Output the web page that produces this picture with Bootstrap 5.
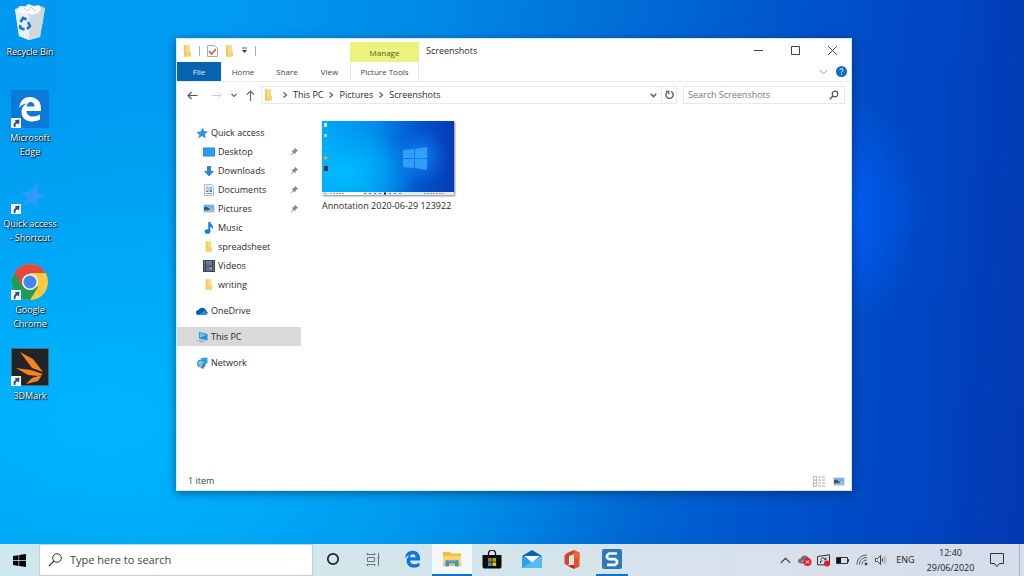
<!DOCTYPE html>
<html lang="en">
<head>
<meta charset="utf-8">
<meta name="viewport" content="width=device-width, initial-scale=1">
<title>Screenshots</title>
<link href="https://cdn.jsdelivr.net/npm/bootstrap@5.3.0/dist/css/bootstrap.min.css" rel="stylesheet">
<style>
  body { font-family: "Open Sans", "Noto Sans", sans-serif; font-size: 9px; line-height: 14px; color: #2a2a2a; }
  button, input { font: inherit; color: inherit; }
  button { background: none; border: 0; padding: 0; }
  svg { display: block; flex: none; }
  a { color: inherit; text-decoration: none; }

  .screen {
    background:
      radial-gradient(75px 115px at 850px 212px, rgba(0, 98, 255, .8), rgba(0, 90, 240, 0)),
      radial-gradient(560px 330px at 100px 420px, rgba(0, 186, 255, .85), rgba(0, 180, 255, 0)),
      linear-gradient(94deg, #0098f0 0, #009cf1 20%, #0088e6 42%, #0068d4 62%, #0052ca 77%, #0045c1 89%, #0339b2 100%);
  }

  /* desktop shortcuts */
  .shortcuts { width: 60px; padding-top: 4px; }
  .shortcut { height: 86px; color: #fff; text-align: center; text-shadow: 1px 1px 1px #000, 0 0 2px rgba(0, 0, 0, .8); }
  .shortcut svg { margin: 0 auto 3px; }

  /* explorer window */
  .explorer { margin: 38px 172px 53px 116px; background: #fff; border: 1px solid #cfeaf8; box-shadow: 0 2px 9px rgba(0, 20, 70, .5); min-width: 0; }
  .title-row { height: 23px; }
  .quick-tools { width: 173px; padding-left: 6px; gap: 7px; }
  .quick-tools .rule { width: 1px; height: 10px; background: #aaa; }
  .manage { width: 69px; height: 20px; background: #ecf27b; color: #555b30; padding-top: 4px; font-size: 8px; }
  .win-title { padding-left: 7px; }
  .win-btn { width: 37px; height: 23px; }
  .tab-row { height: 20px; border-bottom: 1px solid #ececec; font-size: 8px; color: #444; }
  .tab-row .tab { width: 44px; }
  .tab-row .tab-file { background: #0563b1; color: #e4f1fb; }
  .tab-row .tab-view { width: 41px; }
  .tab-row .tab-wide { width: 69px; border: solid #e8e8e8; border-width: 0 1px; }
  .address-row { padding: 4px 6px 4px 3px; }
  .step { width: 24px; height: 18px; }
  .step-sm { width: 12px; }
  .step-md { width: 21px; }
  .field { height: 18px; border: 1px solid #e8e8e8; }
  .crumbs { gap: 5px; padding-left: 2px; }
  .reload { width: 15px; border-left: 1px solid #e8e8e8; }
  .find { width: 162px; margin-left: 6px; padding: 0 5px 0 4px; }
  .find input, .task-search input { border: 0; outline: 0; padding: 0; background: none; min-width: 0; }
  .find input::placeholder { color: #7a7a7a; opacity: 1; }

  .tree { width: 124px; padding-top: 15px; }
  .tree a { height: 19px; gap: 3px; padding-left: 26px; }
  .tree .top { padding-left: 19px; }
  .tree .spaced { margin-top: 7px; }
  .tree .picked { background: #d9d9d9; }
  .tree .pin { margin: 0 2px 0 auto; }
  .tree .ico { width: 12px; }
  .files { padding: 13px 21px; }
  .thumb { width: 132px; margin-bottom: 4px; box-shadow: 1px 1px 2px rgba(0, 0, 0, .5); }
  .status { height: 18px; padding: 0 6px 0 11px; color: #35405c; }

  /* taskbar */
  .taskbar { height: 32px; background: linear-gradient(90deg, #cde8ef, #d4e5eb 45%, #d8e1ec 75%, #d5dcea); color: #222; }
  .start { width: 39px; }
  .task-search { width: 274px; background: #fff; border: 1px solid #c6cdd2; padding-left: 8px; gap: 8px; font-size: 11px; line-height: 16px; }
  .task-search input::placeholder { color: #444; opacity: 1; }
  .task { width: 40px; border-bottom: 2px solid transparent; }
  .task-slim { width: 39px; }
  .task-open { background: #f2f8fb; border-color: #0a75cf; }
  .task-run { width: 32px; margin: 0 4px; border-color: #0a75cf; }
  .tray { width: 19px; }
  .lang { width: 31px; }
  .clock { width: 59px; line-height: 15px; }
  .notes { width: 34px; }
  .peek { width: 5px; margin-left: 5px; border-left: 1px solid #a9b2bf; }
</style>
</head>
<body>
<svg width="0" height="0" class="position-absolute" aria-hidden="true">
  <defs>
    <symbol id="folder" viewBox="0 0 9 12"><path d="M1 0h5l1 1v5l1 1v4l-1 1H1z" fill="#fbdc82"/><path d="M1 0l2 1v10l-2 1z" fill="#f3c95c"/><path d="M3 7h5v4H3z" fill="#f8d272"/></symbol>
    <symbol id="arrow" viewBox="0 0 10 10"><path d="M0 0h10v10H0z" fill="#f4f6fb"/><path d="M3 9C2 6 3.500 4.500 5 4L3.500 2.500 8.500 1.500 8 6.500 6.600 5.300C5 6 4 7 4.500 9z" fill="#27479a"/></symbol>
    <symbol id="pin" viewBox="0 0 9 9"><path d="M5 .8 8.200 4 7 4.300 5.500 5.800 5.200 7.500 3.600 6 .8 8.500.5 8.200 3 5.300 1.500 3.800 3.200 3.500 4.700 2z" fill="#85898d"/></symbol>
    <symbol id="picture" viewBox="0 0 12 9"><path d="M0 0h12v9H0z" fill="#dfe5ea"/><path d="M1 1h10v4H1z" fill="#6fb4ee"/><path d="M1 3q3-1 5 1.500T11 5v3H1z" fill="#2e5b78"/><path d="M1 6.500 11 5.500V8H1z" fill="#98bccb"/></symbol>
    <symbol id="next" viewBox="0 0 6 8"><path d="m1.500 1.500 3 2.500-3 2.500" fill="none" stroke="#555" stroke-width="1.200"/></symbol>
    <symbol id="edge" viewBox="0 0 24 26"><path d="M1 12C2 4 7 1 12 1c7 0 11 5 11 11v3H8.500c.3 4 3 5.500 6.500 5.500 2.500 0 5-.8 7-2v5c-2 1.200-5 2-8 2C7 25.500 3.500 21 3.500 16c0-4 2-7 5-8.500C5 8 2.500 9.500 1 12zm7.500-1.500h8C16.500 7.500 15 6 12.700 6 10.500 6 9 7.800 8.500 10.500z"/></symbol>
    <linearGradient id="wall"><stop offset="0" stop-color="#00a8f8"/><stop offset=".4" stop-color="#008eec"/><stop offset=".7" stop-color="#0058cf"/><stop offset="1" stop-color="#053cb4"/></linearGradient>
    <radialGradient id="glow"><stop offset="0" stop-color="#1593ff" stop-opacity=".8"/><stop offset="1" stop-color="#1070f0" stop-opacity="0"/></radialGradient>
    <radialGradient id="cyan"><stop offset="0" stop-color="#00bcff"/><stop offset="1" stop-color="#00b4ff" stop-opacity="0"/></radialGradient>
  </defs>
</svg>

<div class="screen d-flex flex-column min-vh-100">
  <main class="d-flex flex-grow-1">
    <nav class="shortcuts flex-shrink-0" aria-label="Desktop">
      <a href="#" class="shortcut d-block">
        <svg width="38" height="38" viewBox="0 0 38 38"><path d="M4 5 34 4 29 33 18 36 8 32z" fill="#dfe7ec"/><path d="m4 5 14 3v28L8 32z" fill="#e9eef0"/><path d="m18 8 16-4-5 29-11 3z" fill="#cfd8dd"/><path d="m4 5 6-3 20 0 4 2-16 5z" fill="#b9cdd8"/><path d="m6 6 3-4 5 1 3-3 6 2 5-1 2 4-3 4-6 2-4-2-5 1z" fill="#fafafa"/><path d="m13 4 4 3 3-4 4 4" fill="none" stroke="#c5ccd2"/><g fill="none" stroke="#1679c9" stroke-width="2.600"><path d="m9.500 18 2.500-4 3.500 1.500M17 18l2 4-3 3M13.500 25.500 9.500 24l-.5-3"/></g></svg>
        Recycle Bin</a>
      <a href="#" class="shortcut d-block">
        <svg width="38" height="38" viewBox="0 0 38 38"><path d="M0 0h38v38H0z" fill="#0b79d8"/><use href="#edge" x="7" y="6" width="24" height="26" fill="#fff"/><use href="#arrow" y="28" width="10" height="10"/></svg>
        Microsoft<br>Edge</a>
      <a href="#" class="shortcut d-block">
        <svg width="38" height="38" viewBox="0 0 38 38"><path d="m26 8 1 9 6 2-7 4 1 8-7-5-8 4 4-8-7-5 9-1z" fill="#2c9cf6"/><use href="#arrow" y="28" width="10" height="10"/></svg>
        Quick access<br>- Shortcut</a>
      <a href="#" class="shortcut d-block">
        <svg width="38" height="38" viewBox="0 0 38 38"><circle cx="19" cy="20" r="18" fill="#fbc93f"/><path d="M19 20 3.400 11A18 18 0 0 0 19 38l8-13z" fill="#1f9d55"/><path d="M3.400 11A18 18 0 0 1 34.600 11H19l-8 13z" fill="#e0493c"/><circle cx="19" cy="20" r="8" fill="#f4f7fc"/><circle cx="19" cy="20" r="6.500" fill="#4285f0"/><use href="#arrow" y="28" width="10" height="10"/></svg>
        Google<br>Chrome</a>
      <a href="#" class="shortcut d-block">
        <svg width="38" height="38" viewBox="0 0 38 38"><path d="M.5.500h37v37H.5z" fill="#222427" stroke="#4d6673"/><path d="M9 4 22 11l10 13-11-4zM5 20l15 2 12 4-5 2-10-1zM31 27l-4 6-12 3 6-6z" fill="#f58320"/><use href="#arrow" y="28" width="10" height="10"/></svg>
        3DMark</a>
    </nav>

    <section class="explorer d-flex flex-column flex-grow-1" aria-label="Screenshots">
      <header class="title-row d-flex align-items-center">
        <div class="quick-tools d-flex align-items-center">
          <svg width="9" height="12"><use href="#folder"/></svg>
          <span class="rule"></span>
          <button type="button" aria-label="Properties"><svg width="11" height="12" viewBox="0 0 11 12"><path d="M.5.500h7l3 3v8H.5z" fill="#fff" stroke="#aaa"/><path d="m2 6 2.500 3L9 4" fill="none" stroke="#e4512e" stroke-width="1.500"/></svg></button>
          <button type="button" aria-label="New folder"><svg width="9" height="12"><use href="#folder"/></svg></button>
          <button type="button" aria-label="Customise toolbar"><svg width="7" height="7" viewBox="0 0 7 7"><path d="M1 1h5" stroke="#555"/><path d="M1 3h5L3.500 6z" fill="#333"/></svg></button>
          <span class="rule"></span>
        </div>
        <div class="manage align-self-end text-center">Manage</div>
        <div class="win-title">Screenshots</div>
        <div class="d-flex ms-auto">
          <button type="button" class="win-btn d-flex align-items-center justify-content-center" aria-label="Minimise"><svg width="9" height="9" viewBox="0 0 9 9"><path d="M0 4.500h9" stroke="#444"/></svg></button>
          <button type="button" class="win-btn d-flex align-items-center justify-content-center" aria-label="Maximise"><svg width="9" height="9" viewBox="0 0 9 9"><path d="M.5.500h8v8h-8z" fill="none" stroke="#444"/></svg></button>
          <button type="button" class="win-btn d-flex align-items-center justify-content-center" aria-label="Close"><svg width="9" height="9" viewBox="0 0 9 9"><path d="m0 0 9 9M9 0 0 9" stroke="#444"/></svg></button>
        </div>
      </header>

      <div class="tab-row d-flex">
        <button type="button" class="tab tab-file">File</button>
        <button type="button" class="tab">Home</button>
        <button type="button" class="tab">Share</button>
        <button type="button" class="tab tab-view">View</button>
        <button type="button" class="tab tab-wide">Picture Tools</button>
        <div class="d-flex align-items-center ms-auto gap-2 pe-1">
          <button type="button" aria-label="Expand ribbon"><svg width="9" height="6" viewBox="0 0 9 6"><path d="m.5.800 4 4 4-4" fill="none" stroke="#999"/></svg></button>
          <button type="button" aria-label="Help"><svg width="11" height="11" viewBox="0 0 11 11"><circle cx="5.500" cy="5.500" r="5.500" fill="#0a70c4"/><path d="M3.900 4.100c.2-2 3.400-1.800 3.200 0C7 5.300 5.500 5.200 5.500 6.700M5.500 7.800v1" fill="none" stroke="#fff"/></svg></button>
        </div>
      </div>

      <div class="address-row d-flex align-items-center">
        <button type="button" class="step d-flex align-items-center justify-content-center" aria-label="Back"><svg width="11" height="9" viewBox="0 0 11 9"><path d="M10.500 4.500H1M4.500 1 1 4.500 4.500 8" fill="none" stroke="#555" stroke-width="1.200"/></svg></button>
        <button type="button" class="step d-flex align-items-center justify-content-center" aria-label="Forward"><svg width="11" height="9" viewBox="0 0 11 9"><path d="M1 4.500h9M6.500 1 10 4.500 6.500 8" fill="none" stroke="#d0d0d0"/></svg></button>
        <button type="button" class="step step-sm d-flex align-items-center justify-content-center" aria-label="Recent"><svg width="6" height="5" viewBox="0 0 6 5"><path d="m.5 1 2.500 2.500L5.500 1" fill="none" stroke="#666" stroke-width="1.200"/></svg></button>
        <button type="button" class="step step-md d-flex align-items-center justify-content-center" aria-label="Up"><svg width="9" height="11" viewBox="0 0 9 11"><path d="M4.500 11V1M1 4.500 4.500 1 8 4.500" fill="none" stroke="#666" stroke-width="1.100"/></svg></button>
        <div class="field d-flex align-items-center flex-grow-1">
          <div class="crumbs d-flex align-items-center">
            <svg width="9" height="12"><use href="#folder"/></svg>
            <svg class="ms-1" width="6" height="8"><use href="#next"/></svg>
            <a href="#">This PC</a>
            <svg width="6" height="8"><use href="#next"/></svg>
            <a href="#">Pictures</a>
            <svg width="6" height="8"><use href="#next"/></svg>
            <a href="#">Screenshots</a>
          </div>
          <button type="button" class="ms-auto me-1" aria-label="Previous locations"><svg width="7" height="5" viewBox="0 0 7 5"><path d="m.8.800 2.700 3 2.700-3" fill="none" stroke="#555" stroke-width="1.400"/></svg></button>
          <button type="button" class="reload align-self-stretch d-flex align-items-center justify-content-center" aria-label="Refresh"><svg width="9" height="10" viewBox="0 0 9 10"><path d="M6 1.500a3.600 3.600 0 1 1-4 .8M1 1.300h2.800v3" fill="none" stroke="#555" stroke-width="1.300"/></svg></button>
        </div>
        <label class="field find d-flex align-items-center">
          <input class="flex-grow-1" type="text" placeholder="Search Screenshots" aria-label="Search Screenshots">
          <svg width="10" height="10" viewBox="0 0 10 10"><circle cx="6" cy="4" r="2.800" fill="none" stroke="#555" stroke-width="1.200"/><path d="M4 6 .8 9.200" stroke="#555" stroke-width="1.500"/></svg>
        </label>
      </div>

      <div class="d-flex flex-grow-1">
        <nav class="tree d-flex flex-column flex-shrink-0" aria-label="Folders">
          <a href="#" class="top d-flex align-items-center"><svg class="ico" width="12" height="12" viewBox="0 0 12 12"><path d="m7 .5 1 3.500 4 .5L9 7l.5 4.500L6 9l-4 2.500L3.500 8 .5 5l4-.5z" fill="#2b94e3"/></svg>Quick access</a>
          <a href="#" class="d-flex align-items-center"><svg class="ico" width="12" height="12" viewBox="0 0 12 12"><path d="M0 1.500h12v9H0z" fill="#1988e0"/><path d="M1 2.500h10v7H1z" fill="#2f9cf0"/></svg>Desktop<svg class="pin" width="9" height="9"><use href="#pin"/></svg></a>
          <a href="#" class="d-flex align-items-center"><svg class="ico" width="12" height="12" viewBox="0 0 12 12"><path d="M4 1h4v5h3l-5 5.500L1 6h3z" fill="#2a86d6"/></svg>Downloads<svg class="pin" width="9" height="9"><use href="#pin"/></svg></a>
          <a href="#" class="d-flex align-items-center"><svg class="ico" width="12" height="12" viewBox="0 0 12 12"><path d="M1.500.500h7l2 2v9h-9z" fill="#f3f6f8" stroke="#b4bcc2"/><path d="M3 3h2.500M6.500 3.500H9M3 5h6M3 9.500h6" stroke="#7ea0be"/><path d="M3 6.500h2.500V8H3zM6.500 6H9v2H6.500z" fill="#3e90d0"/></svg>Documents<svg class="pin" width="9" height="9"><use href="#pin"/></svg></a>
          <a href="#" class="d-flex align-items-center"><svg class="ico" width="12" height="9"><use href="#picture"/></svg>Pictures<svg class="pin" width="9" height="9"><use href="#pin"/></svg></a>
          <a href="#" class="d-flex align-items-center"><svg class="ico" width="12" height="12" viewBox="0 0 12 12"><ellipse cx="4.500" cy="9.500" rx="2.800" ry="2.300" fill="#0f82d6"/><path d="M5.300 0H7.300c0 2.500 3.700 3 2.700 7.500C9.300 5.500 8.300 5 7.300 4.800v5h-2z" fill="#0f82d6"/></svg>Music</a>
          <a href="#" class="d-flex align-items-center"><svg class="ico" width="12" height="11"><use href="#folder"/></svg>spreadsheet</a>
          <a href="#" class="d-flex align-items-center"><svg class="ico" width="12" height="12" viewBox="0 0 12 12"><path d="M0 0h12v12H0z" fill="#3b4650"/><path d="M3 1h6v4.500H3z" fill="#4b86c9"/><path d="M3 6.500h6V11H3z" fill="#5574a6"/><path d="M3 3.500 6 2l1 3.500H3z" fill="#a8604b"/><path d="M6 8l3-1v3z" fill="#d69b4c"/><path d="M1.500 1v10M10.500 1v10" stroke="#9ba5ac" stroke-dasharray="1 1.200"/></svg>Videos</a>
          <a href="#" class="d-flex align-items-center"><svg class="ico" width="12" height="11"><use href="#folder"/></svg>writing</a>
          <a href="#" class="top spaced d-flex align-items-center"><svg class="ico" width="12" height="12" viewBox="0 0 12 12"><path d="M2.500 10a2.500 2.500 0 0 1 0-5 4 4 0 0 1 7-.5L12 8l-3 2z" fill="#0b5cad"/><path d="M2.500 10 7 6.500l2.500-.8a2.200 2.200 0 0 1 0 4.300z" fill="#1e8fe0"/></svg>OneDrive</a>
          <a href="#" class="top spaced picked d-flex align-items-center"><svg class="ico" width="12" height="12" viewBox="0 0 12 12"><path d="m3 1 8.500 2v6.500L3 7.500z" fill="#2190d8"/><path d="m3.800 2 7 1.700L4 6.800z" fill="#67c3f3"/><path d="m1 9 5 .2 4 1.800-5 .5z" fill="#9eb0bb"/></svg>This PC</a>
          <a href="#" class="top spaced d-flex align-items-center"><svg class="ico" width="12" height="12" viewBox="0 0 12 12"><path d="m5 1 6.500-.5v5.800L7 8z" fill="#2e9fdf"/><circle cx="5" cy="6.500" r="4" fill="#3a8ebd"/><path d="M1.500 5 5 3.500 8.500 5 6 7l1 2.500-3 1z" fill="#73c8ec"/><path d="m7 7 3 1-3 4-2-1z" fill="#5b7f9b"/></svg>Network</a>
        </nav>
        <div class="files flex-grow-1">
          <a href="#" class="d-inline-block">
            <svg class="thumb" width="132" height="74" viewBox="0 0 132 74">
              <path d="M0 0h132v74H0z" fill="url(#wall)"/><ellipse cx="22" cy="52" rx="75" ry="46" fill="url(#cyan)"/>
              <circle cx="98" cy="36" r="30" fill="url(#glow)"/>
              <path d="m81 29 11-1v9H81zm12-1 12-2v11H93zM81 38h11v9l-11-1zm12 0h12v11l-12-2z" fill="#38a7fb" opacity=".85"/>
              <path d="M0 71h132v3H0z" fill="#e3eaf0"/><path d="M6 71h35v3H6z" fill="#fff"/><path d="M2 72.500h2M8 72.500h14M102 72.500h20" stroke="#999" stroke-dasharray="2 1"/><path d="M42 72.500h38" stroke="#4889b3" stroke-dasharray="2 3"/><path d="M62 71.500h2v2h-2z"/>
              <path d="M2 2h3v4H2z" fill="#d4e6ef"/><path d="M2 13h3v3H2z" fill="#a8dbff"/><path d="m2 27 3-2v3z" fill="#40a8f5"/><circle cx="3.500" cy="37" r="1.800" fill="#dcae4c"/><path d="M2 45h4v5H2z" fill="#4b3034"/>
            </svg>
            Annotation 2020-06-29 123922</a>
        </div>
      </div>

      <footer class="status d-flex align-items-center justify-content-between">
        <span>1 item</span>
        <div class="d-flex align-items-center gap-1">
          <button type="button" aria-label="Details view"><svg width="12" height="11" viewBox="0 0 12 11"><path d="M.5.500h3v10h-3zM.5 4h3M.5 7.500h3" fill="none" stroke="#bbb"/><path d="M5 1h7M5 4h7M5 7h7M5 10h7" stroke="#aaa" stroke-dasharray="3 1"/></svg></button>
          <button type="button" class="ms-1" aria-label="Thumbnail view"><svg width="12" height="9"><use href="#picture"/></svg></button>
        </div>
      </footer>
    </section>
  </main>

  <footer class="taskbar d-flex">
    <button type="button" class="start d-flex align-items-center justify-content-center" aria-label="Start"><svg width="13" height="13" viewBox="0 0 13 13"><path d="m0 2 5.500-.8v5H0zM6.200 1.100 13 0v6.200H6.200zM0 6.900h5.500v5L0 11.100zM6.200 6.900H13V13l-6.800-1z" fill="#000"/></svg></button>
    <label class="task-search d-flex align-items-center">
      <svg width="14" height="14" viewBox="0 0 14 14"><circle cx="9" cy="5" r="4.300" fill="none" stroke="#333"/><path d="M6 8 .8 13.200" stroke="#333" stroke-width="1.200"/></svg>
      <input class="flex-grow-1" type="text" placeholder="Type here to search" aria-label="Type here to search">
    </label>
    <button type="button" class="task d-flex align-items-center justify-content-center" aria-label="Cortana"><svg width="14" height="14" viewBox="0 0 14 14"><circle cx="7" cy="7" r="5.200" fill="none" stroke="#1b2326" stroke-width="1.700"/></svg></button>
    <button type="button" class="task task-slim d-flex align-items-center justify-content-center" aria-label="Task view"><svg width="14" height="13" viewBox="0 0 14 13"><path d="M1.500 4.500h7v4h-7zM.5 1.500h9M.5 11.500h9M1.500 0v2M8.500 0v2M1.500 11v2M8.500 11v2M12.500 0v13M11.500 4.500h2" fill="none" stroke="#6a757a"/></svg></button>
    <button type="button" class="task d-flex align-items-center justify-content-center" aria-label="Edge"><svg width="17" height="18"><use href="#edge" fill="#0c78d4"/></svg></button>
    <button type="button" class="task task-open d-flex align-items-center justify-content-center" aria-label="File Explorer"><svg width="18" height="16" viewBox="0 0 18 16"><path d="M0 1h7l1 1.500h10V15H0z" fill="#f5bd3a"/><path d="M0 5h18v8H0z" fill="#fbd56c"/><path d="M2.500 15.500V9h13v6.500H12v-3H6v3z" fill="#3d92cc"/><path d="M4 9h10v1.500H4z" fill="#5eb3e5"/></svg></button>
    <button type="button" class="task d-flex align-items-center justify-content-center" aria-label="Store"><svg width="20" height="19" viewBox="0 0 20 19"><path d="M6.500 6V3.500a3 3 0 0 1 7 0V6" fill="none" stroke="#111" stroke-width="1.300"/><path d="M.5 5h19v12l-1 1.500h-17L.5 17z" fill="#0b0c0d"/><path d="M6 8h3.700v3.700H6z" fill="#ef5325"/><path d="M10.400 8h3.700v3.700h-3.700z" fill="#80bb0a"/><path d="M6 12.400h3.700V16H6z" fill="#05a3ee"/><path d="M10.400 12.400h3.700V16h-3.700z" fill="#fdb80c"/></svg></button>
    <button type="button" class="task d-flex align-items-center justify-content-center" aria-label="Mail"><svg width="20" height="18" viewBox="0 0 20 18"><path d="m0 6 10-6 10 6-10 7z" fill="#0d65b0"/><path d="M0 6v12h20V6l-10 6.500z" fill="#2aa3e8"/><path d="m20 6-20 12h20z" fill="#53bdf2"/><path d="M2 6h16l-8 6.500z" fill="#f4f9fc"/></svg></button>
    <button type="button" class="task d-flex align-items-center justify-content-center" aria-label="Office"><svg width="16" height="19" viewBox="0 0 16 19"><path d="M10 0 3 3 .5 5.500v8L3 15.500l2-1.500V6l5-2z" fill="#d4432b"/><path d="m10 0 5.500 2.500v14L10 19z" fill="#e9502a"/><path d="M3 15.500 10 15v4z" fill="#b51f24"/><path d="m10 0 5.500 2.500V9L10 8z" fill="#f0642f"/></svg></button>
    <button type="button" class="task task-run d-flex align-items-center justify-content-center" aria-label="Snagit"><svg width="20" height="20" viewBox="0 0 20 20"><rect width="20" height="20" rx="2" fill="#2f78b7"/><path d="M15 4.500H7L5 6.500v2l2 1.700h6l2 1.700v2l-2 2H5" fill="none" stroke="#f2f7fb" stroke-width="2.700"/></svg></button>

    <div class="d-flex ms-auto">
      <button type="button" class="tray d-flex align-items-center justify-content-center" aria-label="Hidden icons"><svg width="11" height="7" viewBox="0 0 11 7"><path d="m.8 5.800 4.700-4.500 4.700 4.500" fill="none" stroke="#333" stroke-width="1.100"/></svg></button>
      <button type="button" class="tray d-flex align-items-center justify-content-center" aria-label="OneDrive"><svg width="14" height="12" viewBox="0 0 14 12"><path d="M2.500 9.500a2.500 2.500 0 0 1 0-5 4.500 4.500 0 0 1 8-1L13 8 8 9.500z" fill="#746f70"/><path d="m3 8 5-3 3 1" stroke="#c0bdbb" fill="none"/><circle cx="9.500" cy="8" r="4" fill="#dc2332"/><path d="m8 6.500 3 3m0-3-3 3" stroke="#fff"/></svg></button>
      <button type="button" class="tray d-flex align-items-center justify-content-center" aria-label="Recorder"><svg width="14" height="13" viewBox="0 0 14 13"><path d="M.5 2.500 12.500.800v10H.5z" fill="none" stroke="#333"/><path d="M3.500 5.500c1-2 4-2 5 0M9 3.500v2.300H7M3.500 9V7h2" fill="none" stroke="#333"/><circle cx="10" cy="9.500" r="3" fill="#df1c2b"/></svg></button>
      <button type="button" class="tray d-flex align-items-center justify-content-center" aria-label="Battery"><svg width="13" height="9" viewBox="0 0 13 9"><path d="M.5 1.500h11v6H.5z" fill="none" stroke="#333"/><path d="M1 2h4v5H1z" fill="#111"/><path d="M12 3h1v3h-1z" fill="#333"/></svg></button>
      <button type="button" class="tray d-flex align-items-center justify-content-center" aria-label="Network"><svg width="12" height="12" viewBox="0 0 12 12"><path d="M1 10.500C1 5 5 1 10.800 1M3.500 10.500c0-4 3-7 7.300-7M6 10.500c0-2.500 2-4.500 4.800-4.500" fill="none" stroke="#555"/><circle cx="10" cy="10" r="1.400" fill="#444"/></svg></button>
      <button type="button" class="tray d-flex align-items-center justify-content-center" aria-label="Volume"><svg width="12" height="12" viewBox="0 0 12 12"><path d="M.5 4.500h2l3-3v9l-3-3h-2z" fill="none" stroke="#444"/><path d="M7 4q1.300 2 0 4" fill="none" stroke="#444"/><path d="M8.800 2.500q2.200 3.500 0 7" fill="none" stroke="#999"/><path d="M10.500 1.500q2.200 4.500 0 9" fill="none" stroke="#bbb"/></svg></button>
      <button type="button" class="lang">ENG</button>
      <button type="button" class="clock text-center">12:40<br>29/06/2020</button>
      <button type="button" class="notes d-flex align-items-center justify-content-center" aria-label="Notifications"><svg width="14" height="14" viewBox="0 0 14 14"><path d="M.5.500h13v10H9.500l-2.500 3-2.500-3h-4z" fill="none" stroke="#333"/></svg></button>
      <button type="button" class="peek" aria-label="Show desktop"></button>
    </div>
  </footer>
</div>
<script src="https://cdn.jsdelivr.net/npm/bootstrap@5.3.0/dist/js/bootstrap.bundle.min.js"></script>
</body>
</html>
